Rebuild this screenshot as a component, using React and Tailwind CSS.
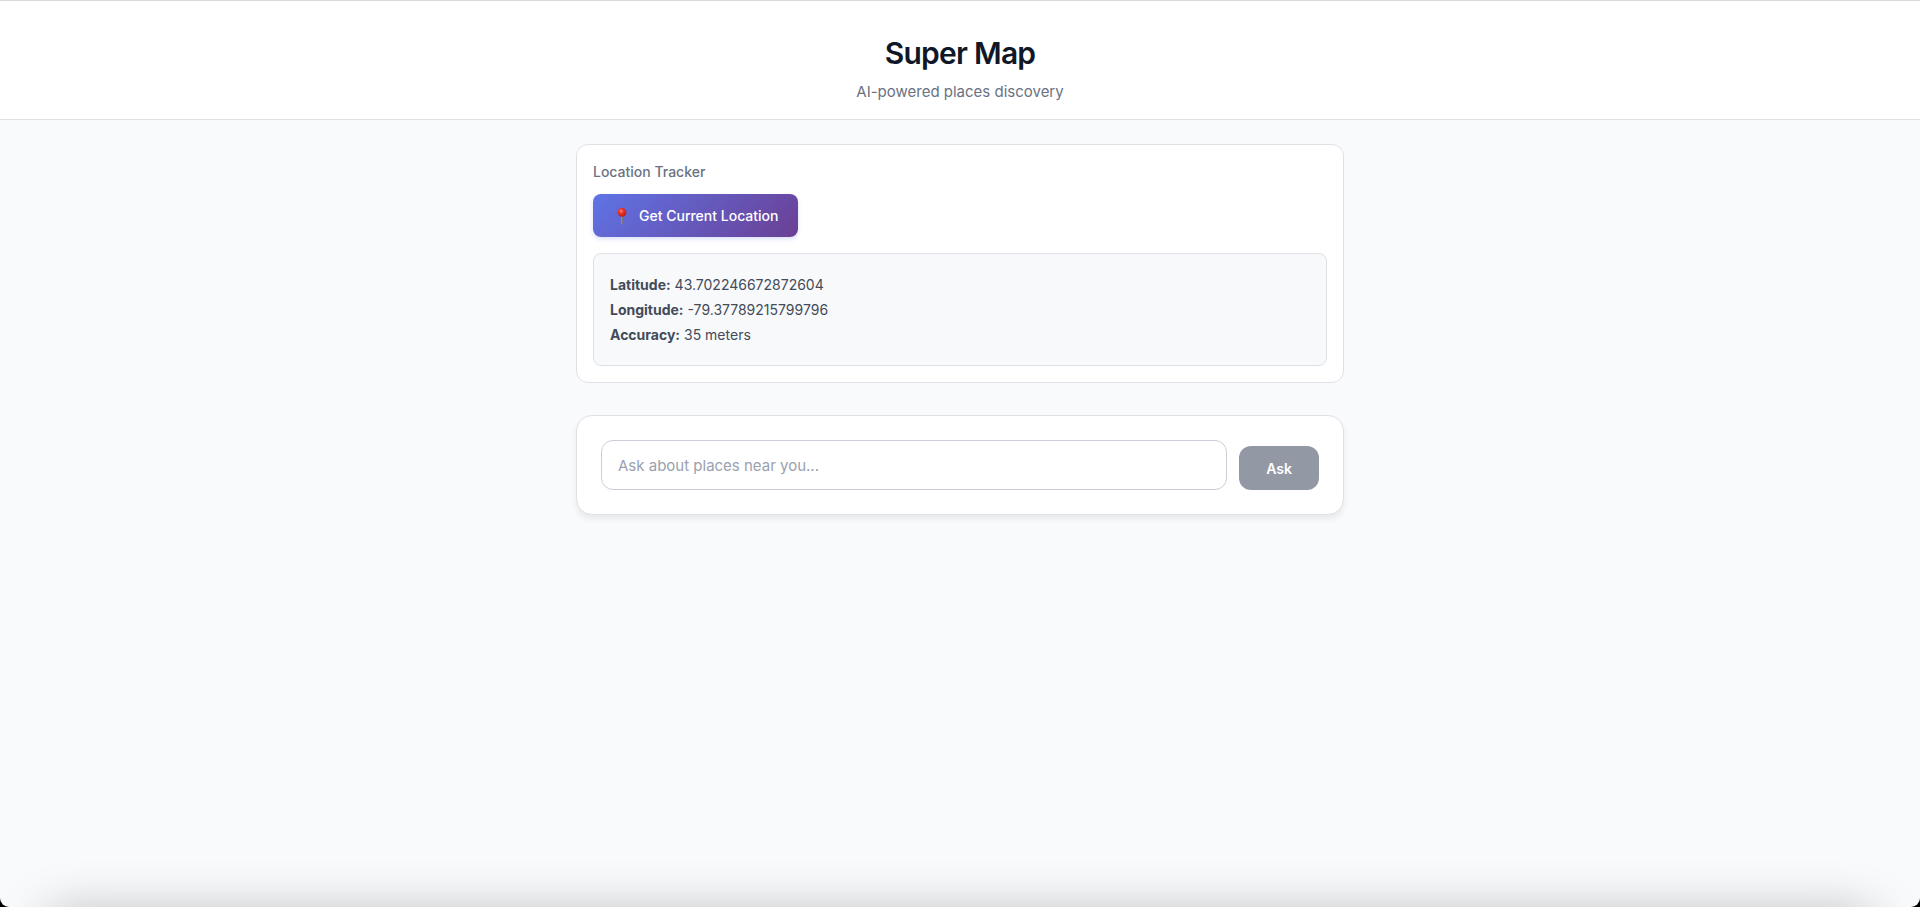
import { useState } from 'react'

const PinIcon = () => (
  <svg width="18" height="18" viewBox="0 0 18 18" aria-hidden="true">
    <defs>
      <radialGradient id="pin-head" cx="0.4" cy="0.35" r="0.65">
        <stop offset="0" stopColor="#ff9488" />
        <stop offset="0.35" stopColor="#ec3a2c" />
        <stop offset="1" stopColor="#c01a14" />
      </radialGradient>
      <linearGradient id="pin-needle" x1="0" x2="1" y1="0" y2="0">
        <stop offset="0" stopColor="#a09da3" />
        <stop offset="1" stopColor="#6c6570" />
      </linearGradient>
    </defs>
    <path d="M8.1 8.5h2l-.2 7.8-.8 1.5-.8-1.5z" fill="url(#pin-needle)" />
    <circle cx="9" cy="5.4" r="4.4" fill="url(#pin-head)" />
  </svg>
)

const Header = () => (
  <header className="flex flex-col items-center gap-[7px] border-y border-t-[#d9d9dc] border-b-[#dfe1e6] bg-white px-6 pt-8 pb-[15px] text-center">
    <h1 className="text-[30px] leading-10 font-semibold tracking-tight text-gray-900">
      Super Map
    </h1>
    <p className="text-[15px] leading-6 text-gray-500">AI-powered places discovery</p>
  </header>
)

const LocationTracker = ({ location, onLocate }) => (
  <section className="rounded-xl border border-[#dfe1e6] bg-white p-4">
    <h2 className="text-sm leading-[21px] font-medium text-gray-500">Location Tracker</h2>
    <button
      type="button"
      onClick={onLocate}
      className="mt-3 flex items-center gap-2 rounded-lg bg-[linear-gradient(135deg,#5f74e6_0%,#6b3f94_100%)] px-5 py-[11px] text-sm leading-[21px] font-medium text-white shadow-[0_2px_4px_rgba(102,126,234,0.25)]"
    >
      <PinIcon />
      Get Current Location
    </button>

    <div className="mt-4 flex flex-col gap-1 rounded-lg border border-[#dfe1e6] bg-[#f8f9fb] px-4 py-5 text-sm leading-[21px] text-[#434b59]">
      <p>
        <strong className="font-bold">Latitude:</strong> {location.latitude}
      </p>
      <p>
        <strong className="font-bold">Longitude:</strong> {location.longitude}
      </p>
      <p>
        <strong className="font-bold">Accuracy:</strong> {location.accuracy} meters
      </p>
    </div>
  </section>
)

const AskForm = () => {
  const [query, setQuery] = useState('')

  return (
    <form
      onSubmit={(e) => e.preventDefault()}
      className="flex items-end gap-3 rounded-2xl border border-[#dfe1e6] bg-white p-6 shadow-[0_4px_6px_rgba(0,0,0,0.07)]"
    >
      <input
        type="text"
        aria-label="Ask about places"
        placeholder="Ask about places near you..."
        value={query}
        onChange={(e) => setQuery(e.target.value)}
        className="h-[50px] min-w-0 flex-1 rounded-xl border border-[#cbced7] bg-white px-4 text-[15px] text-gray-900 placeholder:text-gray-400"
      />
      <button
        type="submit"
        disabled={!query.trim()}
        className="h-11 w-20 rounded-xl bg-indigo-500 pt-0.5 text-sm font-semibold text-white disabled:bg-[#9298a4]"
      >
        Ask
      </button>
    </form>
  )
}

const App = () => {
  const [location, setLocation] = useState({
    latitude: '43.702246672872604',
    longitude: '-79.37789215799796',
    accuracy: 35
  })

  const handleLocate = () => {
    navigator.geolocation?.getCurrentPosition(({ coords }) => {
      setLocation({
        latitude: String(coords.latitude),
        longitude: String(coords.longitude),
        accuracy: Math.round(coords.accuracy)
      })
    })
  }

  return (
    <div className="flex min-h-screen bg-black font-['Inter',sans-serif]">
      <div className="relative w-full overflow-hidden rounded-b-[9px] bg-[#f9fafc]">
        <Header />
        <main className="mx-auto flex w-full max-w-3xl flex-col gap-8 py-6">
          <LocationTracker location={location} onLocate={handleLocate} />
          <AskForm />
        </main>

        {/* Shade along the bottom edge */}
        <div className="pointer-events-none absolute inset-x-12 top-full h-10 shadow-[0_6px_50px_rgba(0,0,0,0.28)]" />
      </div>
    </div>
  )
}

export default App
